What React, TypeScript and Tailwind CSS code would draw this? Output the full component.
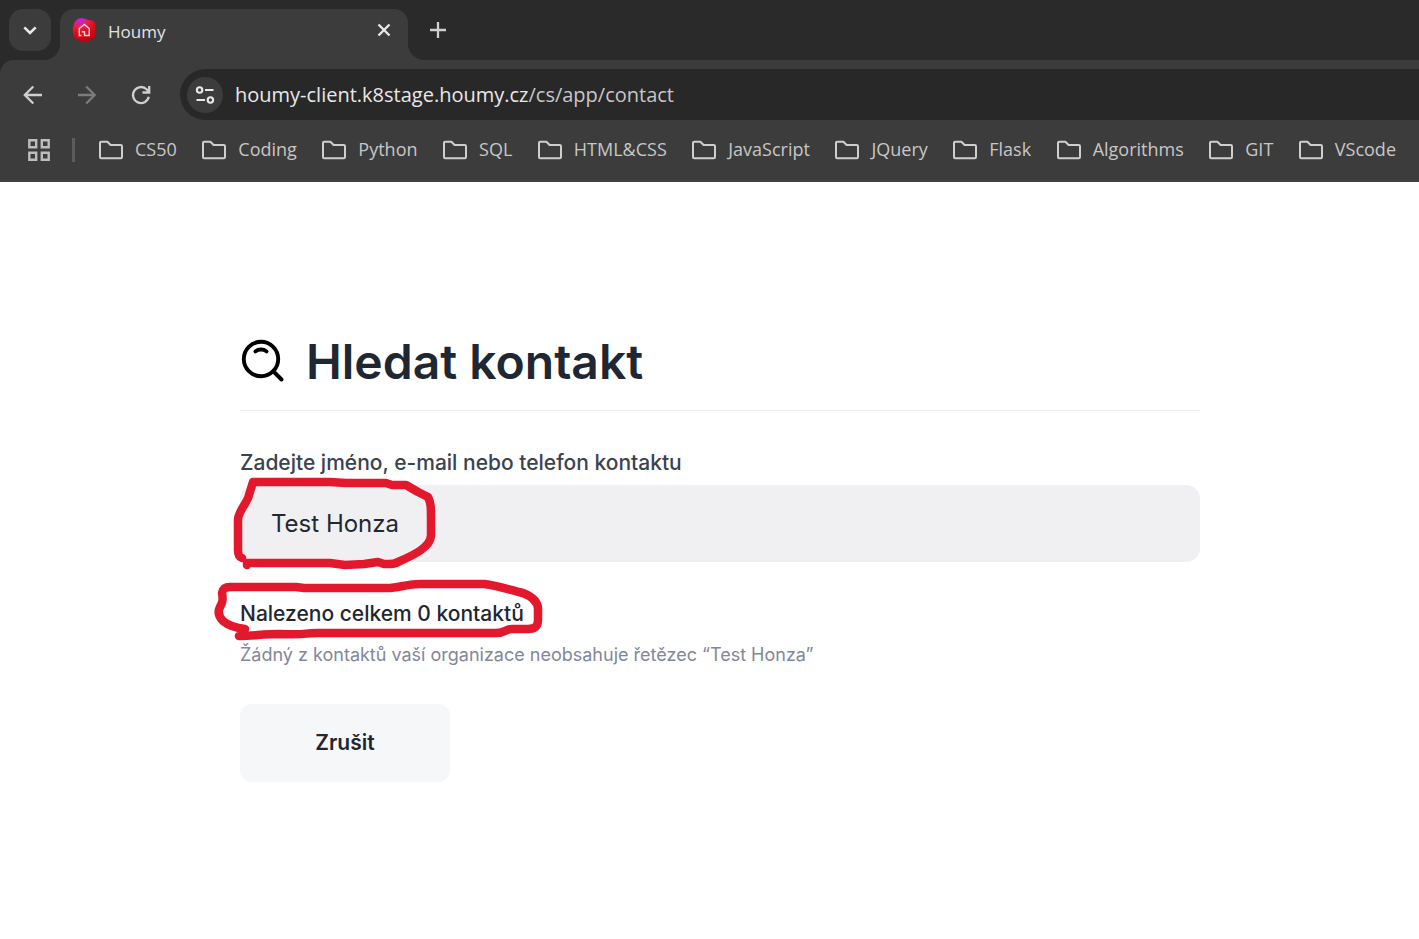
import { useState } from "react";

const bookmarks = [
  "CS50",
  "Coding",
  "Python",
  "SQL",
  "HTML&CSS",
  "JavaScript",
  "JQuery",
  "Flask",
  "Algorithms",
  "GIT",
  "VScode",
];

function FolderIcon() {
  return (
    <svg className="h-5 w-6 shrink-0" viewBox="0 0 24 20" fill="none" stroke="#cfcfcf" strokeWidth="2" strokeLinejoin="round" aria-hidden="true">
      <path d="M1 17V3a1.3 1.3 0 0 1 1.3-1.3H8.4L11.6 5H21.7A1.3 1.3 0 0 1 23 6.300V17A1.200 1.200 0 0 1 21.800 18.200H2.200A1.200 1.200 0 0 1 1 17Z" />
    </svg>
  );
}

function Favicon() {
  return (
    <svg className="size-6 shrink-0" viewBox="0 0 24 24" aria-hidden="true">
      <defs>
        <radialGradient id="favicon-fill" cx="0.33" cy="0.04" r="0.95">
          <stop offset="0" stopColor="#c81cf0" />
          <stop offset="0.16" stopColor="#d01fc0" />
          <stop offset="0.32" stopColor="#ea2150" />
          <stop offset="0.65" stopColor="#dc101c" />
          <stop offset="1" stopColor="#b80610" />
        </radialGradient>
      </defs>
      <path d="M5 1.500C7-.3 12 0 15 1.500C18 2.300 21.500 2 23 5C24 9 23.500 14 23 18C22 21.500 18 22.200 15 23.500C11 24.500 7 22.500 4 21.500C1 20 1.500 17 .7 13C.3 9 1.800 4 5 1.500Z" fill="url(#favicon-fill)" />
      <path d="M9.500 17.500H7.300V10.500L12.300 6.500L17.200 10.500V17.500H12.500V13.800H9.800" fill="none" stroke="#ffd9d9" strokeWidth="1.400" />
    </svg>
  );
}

function TabStrip() {
  return (
    <div className="flex h-[60px] items-start bg-[#2a2a2a] pl-[9px] pt-[9px]">
      <button type="button" aria-label="Search tabs" className="z-10 flex size-[42px] shrink-0 items-center justify-center rounded-[14px] bg-[#3c3c3c]">
        <svg className="size-5" viewBox="0 0 20 20" fill="none" stroke="#e8e8e8" strokeWidth="2.600" aria-hidden="true">
          <path d="M4.300 7.300L10 13L15.700 7.300" />
        </svg>
      </button>
      <div className="-ml-[7px] w-4 shrink-0 self-end bg-[#3c3c3c]">
        <div className="h-4 rounded-br-2xl bg-[#2a2a2a]" />
      </div>
      <div className="flex h-[51px] w-[348px] items-start rounded-t-[14px] bg-[#3c3c3c] pl-3 pt-[9px]">
        <Favicon />
        <span className="ml-3 flex-1 text-[17px] leading-[27px] text-[#e3e3e3]">Houmy</span>
        <button type="button" aria-label="Close tab" className="mr-3.5 flex h-6 w-5 items-center justify-center">
          <svg className="size-5" viewBox="0 0 20 20" fill="none" stroke="#e8e8e8" strokeWidth="2.400" aria-hidden="true">
            <path d="M4.500 4.500L15.500 15.500M15.500 4.500L4.500 15.500" />
          </svg>
        </button>
      </div>
      <div className="w-4 shrink-0 self-end bg-[#3c3c3c]">
        <div className="h-4 rounded-bl-2xl bg-[#2a2a2a]" />
      </div>
      <button type="button" aria-label="New tab" className="ml-1 mt-[11px] flex size-5 items-center justify-center">
        <svg className="size-5" viewBox="0 0 20 20" fill="none" stroke="#cfcfcf" strokeWidth="2.300" aria-hidden="true">
          <path d="M10 2V18M2 10H18" />
        </svg>
      </button>
    </div>
  );
}

function Toolbar() {
  return (
    <div className="bg-[#2a2a2a]">
      <div className="flex items-center rounded-tl-[14px] bg-[#3c3c3c] pl-[21px] pt-[9px]">
        <div className="flex w-[159px] shrink-0 items-center gap-[30px]">
          <button type="button" aria-label="Back">
            <svg className="size-6" viewBox="0 0 24 24" fill="none" stroke="#cfcfcf" strokeWidth="2.300" aria-hidden="true">
              <path d="M21 12H4.500M12.300 3.500L3.800 12L12.300 20.500" />
            </svg>
          </button>
          <button type="button" aria-label="Forward">
            <svg className="size-6" viewBox="0 0 24 24" fill="none" stroke="#7c7c7c" strokeWidth="2.300" aria-hidden="true">
              <path d="M3 12H19.500M11.200 3.500L19.700 12L11.200 20.500" />
            </svg>
          </button>
          <button type="button" aria-label="Reload">
            <svg className="size-6" viewBox="0 0 24 24" fill="none" stroke="#cfcfcf" strokeWidth="2.300" aria-hidden="true">
              <path d="M19.800 13.800A8 8 0 1 1 17.600 6.300L20 8.700M20.200 3V9.500H13.500" />
            </svg>
          </button>
        </div>
        <div className="flex h-[51px] flex-1 items-center rounded-l-full bg-[#282828] pl-[7px]">
          <button type="button" aria-label="View site information" className="flex size-9 shrink-0 items-center justify-center rounded-full bg-[#3c3c3c]">
            <svg className="size-5" viewBox="0 0 20 20" fill="none" stroke="#e8e8e8" strokeWidth="2.100" aria-hidden="true">
              <circle cx="4.600" cy="5" r="2.700" />
              <path d="M10 5H18.500M1.500 15H10" />
              <circle cx="15.400" cy="15" r="2.700" />
            </svg>
          </button>
          <a href="#contact" className="ml-3 text-[20px] leading-7 text-[#c7c7c7]">
            <span className="text-[#e8e8e8]">houmy-client.k8stage.houmy.cz</span>/cs/app/contact
          </a>
        </div>
      </div>
    </div>
  );
}

function BookmarksBar() {
  return (
    <nav aria-label="Bookmarks" className="flex h-[62px] items-center border-b-2 border-[#424242] bg-[#3c3c3c] pl-7 pr-[23px]">
      <button type="button" aria-label="Apps" className="shrink-0">
        <svg className="size-[22px]" viewBox="0 0 22 22" fill="none" stroke="#bdbdbd" strokeWidth="2.400" aria-hidden="true">
          <path d="M1.300 1.300H8.200V8.200H1.300ZM13.800 1.300H20.700V8.200H13.800ZM1.300 13.800H8.200V20.700H1.300ZM13.800 13.800H20.700V20.700H13.800Z" />
        </svg>
      </button>
      <span className="ml-[22px] mr-6 h-6 w-[3px] shrink-0 bg-[#5c5c5c]" />
      <ul className="flex flex-1 items-center justify-between">
        {bookmarks.map((name) => (
          <li key={name}>
            <a href="#bookmark" className="flex items-center gap-3 text-[18px] leading-6 text-[#c7c7c7]">
              <FolderIcon />
              <span className="pb-0.5">{name}</span>
            </a>
          </li>
        ))}
      </ul>
    </nav>
  );
}

function Annotations() {
  return (
    <svg className="pointer-events-none absolute -left-[30px] -top-[10px] h-[170px] w-[340px]" viewBox="210 475 340 170" fill="none" stroke="#e4182c" strokeWidth="8.500" strokeLinecap="round" strokeLinejoin="round" aria-hidden="true">
      <path d="M242 558C239 557 238 555 238 550V520C238 511 248 502 249 495L253 482L330 482L346 483L386 483L392 485L406 485L418 492L428 497C431 503 431 508 431 518V535C431 547 414 555 398 562C393 565 389 564 384 564L378 562L364 564L345 565L330 563H247V565" />
      <path d="M245 629C235 628 229 626 223 621C218 616 218 611 220 607C223 602 223 599 222 593C223 588 226 587 230 587H296L304 588H390C402 587 408 584 420 584H484C500 586 513 591 523 593C533 597 538 603 538 609V620C538 629 532 629 525 629H512C505 629 506 633 496 633H318C300 633 312 635 280 634C262 634 254 636 239 636" />
    </svg>
  );
}

function ContactSearch() {
  const [query, setQuery] = useState("Test Honza");
  return (
    <main className="w-full max-w-[1200px] pl-60 pt-[150px] font-['Inter',sans-serif] text-[#1f2733]">
      <header className="flex items-start gap-5 border-b border-[#ececee] pb-[18px]">
        <svg className="mt-[6px] size-[46px] shrink-0" viewBox="0 0 46 46" fill="none" stroke="#000" strokeWidth="3.900" strokeLinecap="round" aria-hidden="true">
          <circle cx="21" cy="21" r="17.200" />
          <path d="M33.500 33.500L41.500 41.500M15.500 13.400C18.500 10.800 23.500 10.800 26.500 13.400" />
        </svg>
        <h1 className="text-[48px] font-semibold leading-[60px]">Hledat kontakt</h1>
      </header>
      <form onSubmit={(e) => e.preventDefault()}>
        <label htmlFor="query" className="mt-[37px] block text-[21px] font-medium leading-[30px] text-[#3a4250]">
          Zadejte jméno, e-mail nebo telefon kontaktu
        </label>
        <div className="relative mt-[7px]">
          <input
            id="query"
            type="text"
            value={query}
            onChange={(e) => setQuery(e.target.value)}
            className="block h-[77px] w-full rounded-[14px] bg-[#f0f0f2] px-[31px] text-[24px] text-[#23272f] outline-none"
          />
          <p className="mt-[37px] text-[21px] font-medium leading-[30px]">Nalezeno celkem 0 kontaktů</p>
          <Annotations />
        </div>
        <p className="mt-3 text-[18px] leading-[27px] text-[#82879a]">
          Žádný z kontaktů vaší organizace neobsahuje řetězec “Test Honza”
        </p>
        <button type="button" className="mt-9 h-[78px] w-[210px] rounded-xl bg-[#f6f7f9] text-[21px] font-semibold">
          Zrušit
        </button>
      </form>
    </main>
  );
}

export default function App() {
  return (
    <div className="min-h-screen overflow-x-hidden bg-white">
      <div className="font-['Open_Sans',sans-serif]">
        <TabStrip />
        <Toolbar />
        <BookmarksBar />
      </div>
      <ContactSearch />
    </div>
  );
}
